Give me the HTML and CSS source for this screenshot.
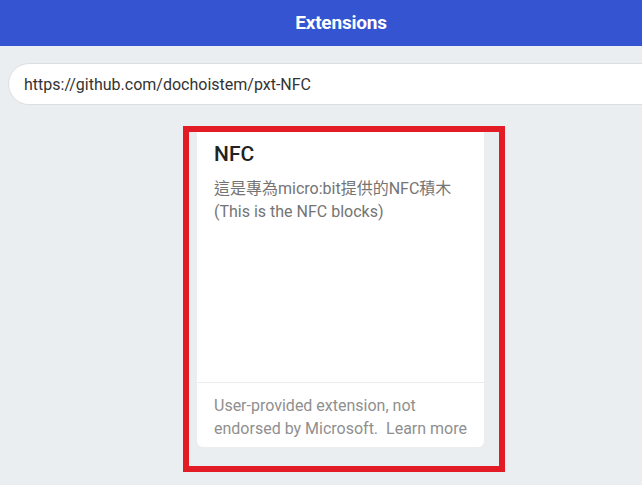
FILE: index.html
```html
<!DOCTYPE html>
<html lang="zh-Hant">
<head>
<meta charset="utf-8">
<title>Extensions</title>
<link rel="stylesheet" href="styles.css">
</head>
<body>
<header class="topbar"><h1 class="title">Extensions</h1></header>
<main class="content">
  <div class="search"><span class="search-text">https://github.com/dochoistem/pxt-NFC</span></div>
  <div class="cards">
    <div class="card-wrap">
      <article class="card">
        <div class="card-body">
          <h2 class="card-title">NFC</h2>
          <p class="card-desc">這是專為micro:bit提供的NFC積木<br>(This is the NFC blocks)</p>
        </div>
        <div class="card-footer">User-provided extension, not endorsed by Microsoft.&nbsp;&nbsp;Learn more</div>
      </article>
      <div class="highlight"></div>
    </div>
  </div>
</main>
</body>
</html>
```
FILE: styles.css
```css
html, body {
  margin: 0;
  padding: 0;
  height: 100%;
}
body {
  background: #ebeef0;
  font-family: Roboto, "Noto Sans CJK TC", sans-serif;
  overflow: hidden;
}
.topbar {
  height: 46px;
  background: #3454d1;
  display: flex;
  align-items: center;
  justify-content: center;
  padding-left: 40px;
}
.title {
  margin: 0 0 1px;
  color: #fff;
  font-size: 19px;
  font-weight: 700;
  letter-spacing: -0.2px;
}
.content {
  padding: 17px 0 0 8px;
}
.search {
  height: 40px;
  background: #fff;
  border: 1px solid #dcdfe1;
  border-right: none;
  border-radius: 21px 0 0 21px;
  display: flex;
  align-items: center;
  padding-left: 15px;
}
.search-text {
  font-size: 16px;
  color: #333;
}
.cards {
  display: flex;
  justify-content: flex-start;
  padding-left: 189px;
  margin-top: 22px;
}
.card-wrap {
  position: relative;
}
.card {
  width: 287px;
  background: #fff;
  border-radius: 6px;
  display: flex;
  flex-direction: column;
}
.card-body {
  height: 256px;
  box-sizing: border-box;
  padding: 13px 16px 0 17px;
  border-bottom: 1px solid #ececec;
}
.card-title {
  margin: 0;
  font-size: 21px;
  font-weight: 500;
  line-height: 28px;
  color: #222;
}
.card-desc {
  margin: 9px 0 0;
  font-size: 16px;
  line-height: 23px;
  color: #747474;
}
.card-footer {
  padding: 11px 16px 7px 17px;
  font-size: 16px;
  line-height: 23px;
  color: #8f8f8f;
}
.highlight {
  position: absolute;
  left: -14px;
  top: -1px;
  right: -21px;
  bottom: -25px;
  border: 6px solid #e21b25;
  box-sizing: border-box;
}
```
